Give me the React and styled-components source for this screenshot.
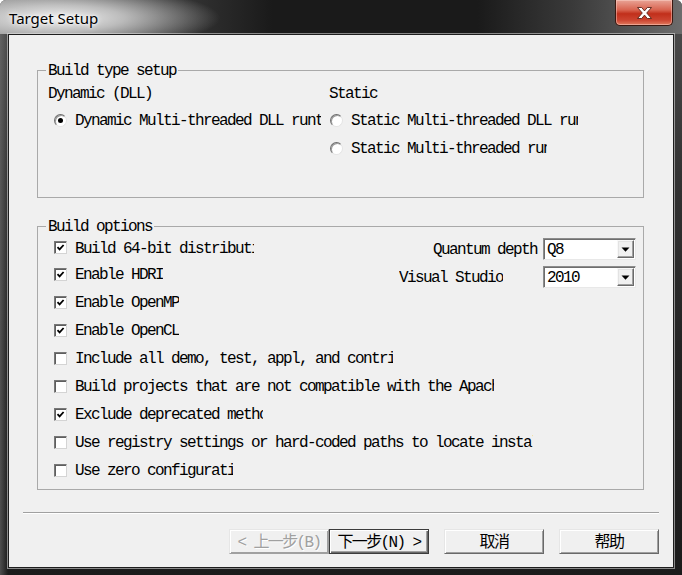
import React from "react";
import styled, { createGlobalStyle, css } from "styled-components";

const MONO = `"Liberation Mono", "Noto Sans CJK SC", monospace`;

const GlobalStyle = createGlobalStyle`
  html, body {
    margin: 0;
    padding: 0;
    background: #ffffff;
  }
  #root {
    width: 682px;
    height: 575px;
  }
`;

const Window = styled.div`
  width: 682px;
  height: 575px;
  display: flex;
  flex-direction: column;
  box-sizing: border-box;
  border-radius: 6px 6px 0 0;
  overflow: hidden;
  background:
    linear-gradient(90deg, rgba(120, 120, 120, 0.55) 0, rgba(0, 0, 0, 0) 8px),
    linear-gradient(180deg, #4e4e4e 0%, #333 30%, #242424 60%, #1b1b1b 100%);
`;

const TitleBar = styled.div`
  height: 34px;
  flex: none;
  display: flex;
  justify-content: space-between;
  align-items: flex-start;
  background:
    radial-gradient(ellipse 160px 32px at 60px 18px, rgba(245, 245, 245, 0.97) 0%, rgba(215, 215, 215, 0.8) 40%, rgba(120, 120, 120, 0) 100%),
    linear-gradient(90deg, #7a7a7a 0%, #3a3a3a 24%, #1a1a1a 40%, #1a1a1a 70%, #3a3a3a 84%, #6c6c6c 100%);
`;

const Title = styled.div`
  padding: 8px 0 0 9px;
  font: 15px/20px "Noto Sans", "Open Sans", sans-serif;
  color: #000;
  text-shadow: 0 0 6px #fff, 0 0 3px #fff;
`;

const CloseButton = styled.div`
  width: 58px;
  height: 26px;
  margin-right: 9px;
  box-sizing: border-box;
  display: flex;
  align-items: center;
  justify-content: center;
  border: 1px solid #3b1810;
  border-top: none;
  border-radius: 0 0 5px 5px;
  background: linear-gradient(180deg, #e9a496 0%, #d8634f 40%, #c12f1b 55%, #cc4430 80%, #e07a5e 100%);
  box-shadow: inset 0 0 0 1px rgba(255, 220, 210, 0.45);
`;

const Client = styled.div`
  flex: 1;
  margin: 0 8px 7px;
  background: #f0f0f0;
  border: 1px solid #1e1e1e;
  box-shadow: 0 0 0 1px rgba(225, 225, 225, 0.55);
  display: flex;
  flex-direction: column;
`;

const Groups = styled.div`
  padding: 26px 29px 0 28px;
  display: flex;
  flex-direction: column;
  gap: 19px;
`;

const GroupBox = styled.fieldset`
  margin: 0;
  padding: 0;
  min-width: 0;
  border: 1px solid #a9a9a9;
`;

const monoText = css`
  font: 16px/16px ${MONO};
  letter-spacing: -1.6px;
  color: #000;
  padding-top: 2px;
`;

const Legend = styled.legend`
  ${monoText}
  margin-left: 8px;
  padding-left: 2px;
  padding-right: 2px;
`;

const BuildTypeGrid = styled.div`
  display: grid;
  grid-template-columns: 281px 1fr;
  grid-template-rows: 27px 28px 28px;
  padding: 0 0 35px 10px;
  align-items: center;
`;

const Text = styled.span`
  ${monoText}
  flex: none;
  white-space: nowrap;
  overflow: hidden;
  ${(p) => p.$clip && css`width: ${p.$clip}px;`}
`;

const Option = styled.label`
  display: flex;
  align-items: center;
  gap: 8px;
  padding-left: ${(p) => p.$indent || 0}px;
`;

const RadioCircle = styled.span`
  width: 13px;
  height: 13px;
  flex: none;
  box-sizing: border-box;
  border-radius: 50%;
  background: radial-gradient(circle at 60% 60%, #fff 0%, #fff 55%, #e2e2e2 100%);
  border: 1px solid;
  border-color: #6e6e6e #e4e4e4 #e4e4e4 #6e6e6e;
  box-shadow: inset 1px 1px 0 #9a9a9a;
  display: flex;
  align-items: center;
  justify-content: center;

  &::after {
    content: "";
    width: 5px;
    height: 5px;
    border-radius: 50%;
    background: #000;
    display: ${(p) => (p.$checked ? "block" : "none")};
  }
`;

const OptionsBody = styled.div`
  display: flex;
  align-items: flex-start;
  padding: 0 7px 5px 16px;
`;

const CheckList = styled.div`
  flex: 1;
  min-width: 0;
  display: flex;
  flex-direction: column;
`;

const CheckRow = styled(Option)`
  height: 28px;
  &:first-child {
    height: 25px;
  }
`;

const CheckBox = styled.span`
  width: 13px;
  height: 13px;
  flex: none;
  box-sizing: border-box;
  background: #fff;
  border: 1px solid;
  border-color: #787878 #d4d4d4 #d4d4d4 #787878;
  box-shadow: inset 1px 1px 0 #5e5e5e;
  display: flex;
  align-items: center;
  justify-content: center;
`;

const ComboGrid = styled.div`
  flex: none;
  display: grid;
  grid-template-columns: 144px 93px;
  grid-auto-rows: 22px;
  row-gap: 6px;
  margin-top: 3px;
  align-items: center;
`;

const ComboLabel = styled(Text)`
  justify-self: ${(p) => (p.$right ? "end" : "start")};
  padding-right: ${(p) => (p.$right ? 6 : 0)}px;
`;

const Combo = styled.div`
  height: 22px;
  box-sizing: border-box;
  display: flex;
  align-items: center;
  background: #fff;
  border: 1px solid;
  border-color: #8c8c8c #e8e8e8 #e8e8e8 #8c8c8c;
  box-shadow: inset 1px 1px 0 #6e6e6e;
  padding: 1px 1px 1px 3px;
`;

const ComboValue = styled(Text)`
  flex: 1;
`;

const DropButton = styled.span`
  width: 17px;
  height: 18px;
  box-sizing: border-box;
  display: flex;
  align-items: center;
  justify-content: center;
  background: #f0f0f0;
  border: 1px solid;
  border-color: #f8f8f8 #6a6a6a #6a6a6a #f8f8f8;
  box-shadow: inset -1px -1px 0 #a0a0a0, inset 1px 1px 0 #e3e3e3;
`;

const Footer = styled.div`
  padding: 22px 14px 0;
  display: flex;
  flex-direction: column;
  gap: 15px;
`;

const Separator = styled.div`
  height: 1px;
  background: #a0a0a0;
  border-bottom: 1px solid #fff;
`;

const ButtonRow = styled.div`
  display: flex;
  justify-content: flex-end;
`;

const Button = styled.button`
  width: 100px;
  height: 25px;
  margin-left: ${(p) => p.$gap || 0}px;
  box-sizing: border-box;
  padding: 2px 0 0;
  font: 16px/16px ${MONO};
  letter-spacing: -1.6px;
  color: #000;
  background: #f0f0f0;
  border: 1px solid;
  border-color: #e6e6e6 #696969 #696969 #e6e6e6;
  box-shadow: inset 1px 1px 0 #fff, inset -1px -1px 0 #a0a0a0;

  ${(p) =>
    p.$default &&
    css`
      border-color: #3c3c3c;
      box-shadow: inset 1px 1px 0 #fff, inset -1px -1px 0 #696969, inset -2px -2px 0 #a0a0a0;
    `}

  ${(p) =>
    p.disabled &&
    css`
      color: #a0a0a0;
      text-shadow: 1px 1px 0 #fff;
      border-color: #e6e6e6 #a0a0a0 #a0a0a0 #e6e6e6;
    `}
`;

const checks = [
  { text: "Build 64-bit distribution", on: true, clip: 179 },
  { text: "Enable HDRI", on: true },
  { text: "Enable OpenMP", on: true },
  { text: "Enable OpenCL", on: true },
  { text: "Include all demo, test, appl, and contrib directories", on: false, clip: 318 },
  { text: "Build projects that are not compatible with the Apache license", on: false, clip: 419 },
  { text: "Exclude deprecated methods", on: true, clip: 188 },
  { text: "Use registry settings or hard-coded paths to locate installed programs", on: false, clip: 458 },
  { text: "Use zero configuration", on: false, clip: 158 },
];

const CloseGlyph = () => (
  <svg width="15" height="12" viewBox="-0.5 -0.5 15 12">
    <path
      d="M0 0H4.2L7 3.4L9.8 0H14L9.2 5.5L14 11H9.8L7 7.6L4.2 11H0L4.8 5.5Z"
      fill="#fff"
      stroke="#5a2418"
      strokeWidth="0.9"
      strokeLinejoin="round"
    />
  </svg>
);

const CheckMark = () => (
  <svg width="9" height="9" viewBox="0 0 9 9">
    <path d="M1.5 4.2L3.6 6.4L7.6 2" fill="none" stroke="#000" strokeWidth="1.8" />
  </svg>
);

const Arrow = () => (
  <svg width="9" height="5" viewBox="0 0 9 5">
    <path d="M0.5 0.5H8.5L4.5 4.8Z" fill="#000" />
  </svg>
);

export default function App() {
  return (
    <>
      <GlobalStyle />
      <Window>
        <TitleBar>
          <Title>Target Setup</Title>
          <CloseButton>
            <CloseGlyph />
          </CloseButton>
        </TitleBar>
        <Client>
          <Groups>
            <GroupBox>
              <Legend>Build type setup</Legend>
              <BuildTypeGrid>
                <Text>Dynamic (DLL)</Text>
                <Text>Static</Text>
                <Option $indent={6}>
                  <RadioCircle $checked />
                  <Text $clip={246}>Dynamic Multi-threaded DLL runtimes</Text>
                </Option>
                <Option $indent={1}>
                  <RadioCircle />
                  <Text $clip={227}>Static Multi-threaded DLL runtimes</Text>
                </Option>
                <span />
                <Option $indent={1}>
                  <RadioCircle />
                  <Text $clip={196}>Static Multi-threaded runtimes</Text>
                </Option>
              </BuildTypeGrid>
            </GroupBox>

            <GroupBox>
              <Legend>Build options</Legend>
              <OptionsBody>
                <CheckList>
                  {checks.map((c) => (
                    <CheckRow key={c.text}>
                      <CheckBox>{c.on && <CheckMark />}</CheckBox>
                      <Text $clip={c.clip}>{c.text}</Text>
                    </CheckRow>
                  ))}
                </CheckList>
                <ComboGrid>
                  <ComboLabel $right>Quantum depth</ComboLabel>
                  <Combo>
                    <ComboValue>Q8</ComboValue>
                    <DropButton>
                      <Arrow />
                    </DropButton>
                  </Combo>
                  <ComboLabel>Visual Studio</ComboLabel>
                  <Combo>
                    <ComboValue>2010</ComboValue>
                    <DropButton>
                      <Arrow />
                    </DropButton>
                  </Combo>
                </ComboGrid>
              </OptionsBody>
            </GroupBox>
          </Groups>

          <Footer>
            <Separator />
            <ButtonRow>
              <Button disabled>&lt; 上一步(B)</Button>
              <Button $default>下一步(N) &gt;</Button>
              <Button $gap={15}>取消</Button>
              <Button $gap={15}>帮助</Button>
            </ButtonRow>
          </Footer>
        </Client>
      </Window>
    </>
  );
}
